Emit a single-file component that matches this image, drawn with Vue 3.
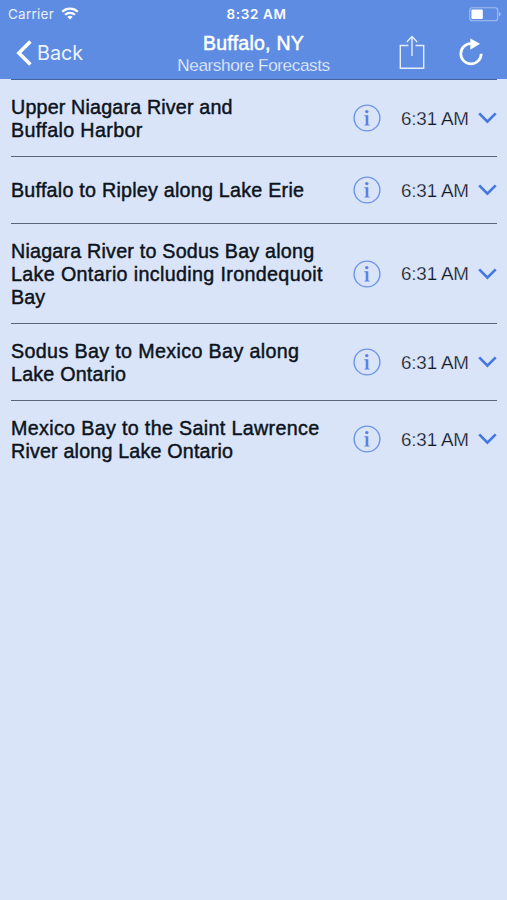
<script setup>
const forecasts = [
  { id: 1, size: 'two', lines: [['Upper Niagara River and', 0.17], ['Buffalo Harbor', 0.37]] },
  { id: 2, size: 'one', lines: [['Buffalo to Ripley along Lake Erie', 0.24]] },
  { id: 3, size: 'three', lines: [['Niagara River to Sodus Bay along', 0.21], ['Lake Ontario including Irondequoit', 0.35], ['Bay', 0.1]] },
  { id: 4, size: 'two', lines: [['Sodus Bay to Mexico Bay along', 0.36], ['Lake Ontario', 0.2]] },
  { id: 5, size: 'two', lines: [['Mexico Bay to the Saint Lawrence', 0.34], ['River along Lake Ontario', 0.18]] },
]
</script>

<template>
  <div class="screen">
    <header class="header">
      <div class="status">
        <div class="carrier">
          <span>Carrier</span>
          <svg class="wifi" width="18" height="13" viewBox="0 0 18 13" fill="none" stroke="#fff" stroke-width="2.2">
            <path d="M1.2 4.8a11.2 11.2 0 0 1 15.6 0" />
            <path d="M4.1 7.8a7 7 0 0 1 9.8 0" />
            <path d="M9 12.6 6.4 10a3.7 3.7 0 0 1 5.2 0Z" fill="#fff" stroke="none" />
          </svg>
        </div>
        <span class="clock">8:32 AM</span>
        <svg class="battery" width="32" height="15" viewBox="0 0 32 15">
          <rect x="0.7" y="0.7" width="28" height="13" rx="2.8" fill="none" stroke="#a6c0f1" stroke-width="1.1" />
          <rect x="2.4" y="2.4" width="11.4" height="9.6" rx="1" fill="#fff" />
          <path d="M30 5v4.6q1.6-.6 1.6-2.3T30 5Z" fill="#a6c0f1" />
        </svg>
      </div>
      <nav class="nav">
        <div class="back">
          <svg width="16" height="26" viewBox="0 0 16 26" fill="none" stroke="#fff" stroke-width="3.6">
            <path d="M14.4 1.4 2.9 13l11.5 11.6" />
          </svg>
          <span>Back</span>
        </div>
        <div class="titles">
          <div class="title">Buffalo, NY</div>
          <div class="subtitle">Nearshore Forecasts</div>
        </div>
        <div class="actions">
          <svg width="26" height="35" viewBox="0 0 26 35" fill="none" stroke="#e6eefc" stroke-width="1.4">
            <path d="M9.4 10.5H1.3v22.7h23.4V10.5h-8.1M13 21V1.8M7.8 7 13 1.6 18.2 7" />
          </svg>
          <svg width="24" height="28" viewBox="0 0 24 28" fill="none">
            <path d="M13.5 5.5H12a10.2 10.2 0 1 0 10.2 10.2" stroke="#fff" stroke-width="2.7" />
            <path d="M11.3.5v11.2l9.7-5.9Z" fill="#fff" />
          </svg>
        </div>
      </nav>
    </header>
    <main class="list">
      <div v-for="item in forecasts" :key="item.id" class="row" :class="item.size">
        <div class="name">
          <div v-for="[text, tracking] in item.lines" :key="text" :style="{ letterSpacing: tracking + 'px' }">{{ text }}</div>
        </div>
        <svg class="info" width="28" height="28" viewBox="0 0 28 28">
          <circle cx="14" cy="14" r="12.9" fill="none" stroke="#6a95e8" stroke-width="1.4" />
          <circle cx="13.8" cy="7.6" r="1.7" fill="#5584e2" />
          <path d="M11.3 11.3h4v9.1l1.5.5v.7h-5.5v-.7l1.4-.5v-8l-1.4-.4Z" fill="#5584e2" />
        </svg>
        <span class="time">6:31 AM</span>
        <svg class="chevron" width="19" height="12" viewBox="0 0 19 12" fill="none" stroke="#4278df" stroke-width="2.7">
          <path d="m1.2 1.4 8.2 8.2 8.3-8.2" />
        </svg>
      </div>
    </main>
  </div>
</template>

<style>
body { margin: 0; background: #dae4f8; }
</style>

<style scoped>
.screen {
  width: 507px;
  height: 900px;
  overflow: hidden;
  background: #dae4f8;
  font-family: "Liberation Sans", Arial, sans-serif;
  white-space: nowrap;
}
svg { display: block; flex: none; }
.header { height: 79px; background: #5d8ce2; color: #fff; }
.status {
  display: grid;
  grid-template-columns: 1fr auto 1fr;
  align-items: center;
  height: 27px;
  padding: 0 6px 0 8px;
  font: 400 13.5px/27px Inter, sans-serif;
}
.carrier { display: flex; align-items: center; gap: 7px; padding-top: 1px; letter-spacing: 0.25px; color: #e9f0fd; }
.wifi { margin-top: -3px; }
.clock { font-weight: 600; letter-spacing: 0.65px; margin-left: 4px; padding-top: 1px; }
.battery { justify-self: end; }
.nav {
  display: grid;
  grid-template-columns: 177px 153px 1fr;
  height: 52px;
}
.back {
  display: flex;
  align-items: center;
  gap: 5px;
  height: 51px;
  padding-left: 16px;
  font: 400 19.8px/28px Inter, sans-serif;
  color: #eef4fe;
}
.titles { text-align: center; padding-top: 5px; }
.title {
  font-size: 19.5px;
  line-height: 22px;
  letter-spacing: 0.25px;
  -webkit-text-stroke: 0.5px #fff;
}
.subtitle {
  font-size: 17.2px;
  line-height: 22px;
  letter-spacing: -0.42px;
  margin: 0 -10px;
  color: #eef4fe;
  -webkit-text-stroke: 0.25px #5d8ce2;
}
.actions { display: flex; align-items: flex-start; gap: 34px; padding: 8px 0 0 69px; }
.actions svg + svg { margin-top: 3px; }
.list { padding: 0 10px 0 11px; }
.row {
  display: grid;
  grid-template-columns: 342px 48px 77px 19px;
  align-items: center;
  box-sizing: border-box;
  border-top: 1px solid #5a6579;
}
.row:first-child { border-color: #42649f; }
.one { height: 67px; }
.two { height: 77px; }
.three { height: 100px; }
.name {
  padding-top: 1px;
  font-size: 19.7px;
  line-height: 23px;
  color: #0b1320;
  -webkit-text-stroke: 0.45px #0b1320;
}
.time {
  font-size: 18.8px;
  line-height: 23px;
  letter-spacing: -0.15px;
  color: #10151f;
  -webkit-text-stroke: 0.25px #dae4f8;
}
</style>
